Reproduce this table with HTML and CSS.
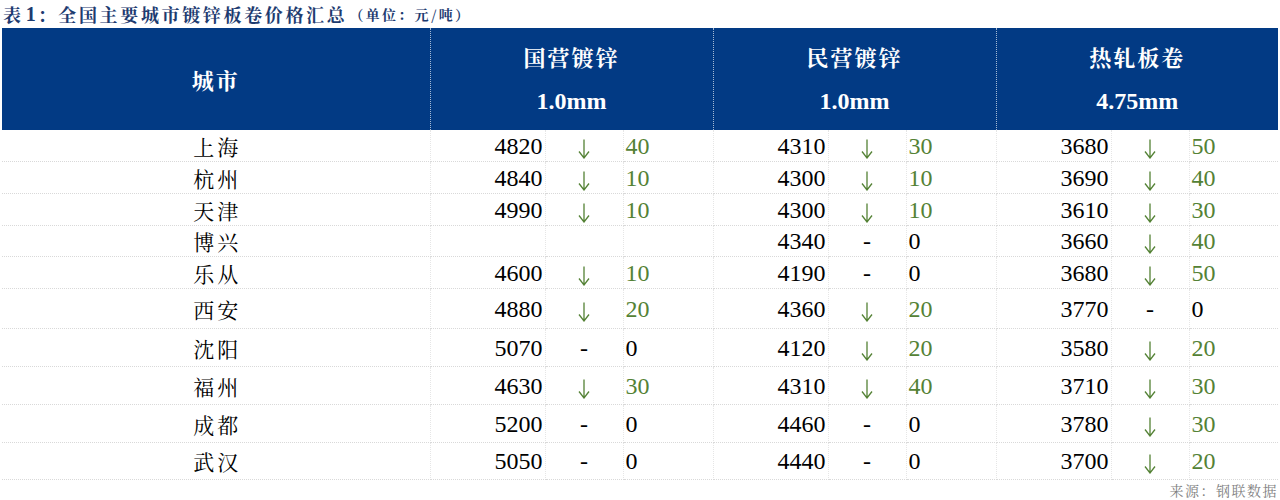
FILE: index.html
```html
<!DOCTYPE html>
<html lang="zh-CN">
<head>
<meta charset="utf-8">
<title>全国主要城市镀锌板卷价格汇总</title>
<link rel="stylesheet" href="styles.css">
</head>
<body>
<div class="title"><span>表</span><span class="tnum">1</span><span>：全国主要城市镀锌板卷价格汇总</span><span class="unit">（单位：元/吨）</span></div>
<table class="grid">
  <colgroup>
    <col class="c-city">
    <col class="c-val"><col class="c-arr"><col class="c-chg">
    <col class="c-val"><col class="c-arr"><col class="c-chg">
    <col class="c-val"><col class="c-arr"><col class="c-chg3">
  </colgroup>
  <thead>
    <tr>
      <th class="hcity">城市</th>
      <th colspan="3" class="hgroup"><div class="h1">国营镀锌</div><div class="h2">1.0mm</div></th>
      <th colspan="3" class="hgroup"><div class="h1">民营镀锌</div><div class="h2">1.0mm</div></th>
      <th colspan="3" class="hgroup last"><div class="h1">热轧板卷</div><div class="h2">4.75mm</div></th>
    </tr>
  </thead>
  <tbody>
    <tr class="r32">
      <td class="city">上海</td>
      <td class="val">4820</td><td class="arr"><svg class="down" viewBox="0 0 12 20"><path d="M6 0.5V19M1 12.5L6 19L11 12.5"/></svg></td><td class="chg g">40</td>
      <td class="val">4310</td><td class="arr"><svg class="down" viewBox="0 0 12 20"><path d="M6 0.5V19M1 12.5L6 19L11 12.5"/></svg></td><td class="chg g">30</td>
      <td class="val">3680</td><td class="arr"><svg class="down" viewBox="0 0 12 20"><path d="M6 0.5V19M1 12.5L6 19L11 12.5"/></svg></td><td class="chg g">50</td>
    </tr>
    <tr class="r32">
      <td class="city">杭州</td>
      <td class="val">4840</td><td class="arr"><svg class="down" viewBox="0 0 12 20"><path d="M6 0.5V19M1 12.5L6 19L11 12.5"/></svg></td><td class="chg g">10</td>
      <td class="val">4300</td><td class="arr"><svg class="down" viewBox="0 0 12 20"><path d="M6 0.5V19M1 12.5L6 19L11 12.5"/></svg></td><td class="chg g">10</td>
      <td class="val">3690</td><td class="arr"><svg class="down" viewBox="0 0 12 20"><path d="M6 0.5V19M1 12.5L6 19L11 12.5"/></svg></td><td class="chg g">40</td>
    </tr>
    <tr class="r32">
      <td class="city">天津</td>
      <td class="val">4990</td><td class="arr"><svg class="down" viewBox="0 0 12 20"><path d="M6 0.5V19M1 12.5L6 19L11 12.5"/></svg></td><td class="chg g">10</td>
      <td class="val">4300</td><td class="arr"><svg class="down" viewBox="0 0 12 20"><path d="M6 0.5V19M1 12.5L6 19L11 12.5"/></svg></td><td class="chg g">10</td>
      <td class="val">3610</td><td class="arr"><svg class="down" viewBox="0 0 12 20"><path d="M6 0.5V19M1 12.5L6 19L11 12.5"/></svg></td><td class="chg g">30</td>
    </tr>
    <tr class="r31">
      <td class="city">博兴</td>
      <td class="val"></td><td class="arr"></td><td class="chg"></td>
      <td class="val">4340</td><td class="arr"><span class="dash">-</span></td><td class="chg">0</td>
      <td class="val">3660</td><td class="arr"><svg class="down" viewBox="0 0 12 20"><path d="M6 0.5V19M1 12.5L6 19L11 12.5"/></svg></td><td class="chg g">40</td>
    </tr>
    <tr class="r32">
      <td class="city">乐从</td>
      <td class="val">4600</td><td class="arr"><svg class="down" viewBox="0 0 12 20"><path d="M6 0.5V19M1 12.5L6 19L11 12.5"/></svg></td><td class="chg g">10</td>
      <td class="val">4190</td><td class="arr"><span class="dash">-</span></td><td class="chg">0</td>
      <td class="val">3680</td><td class="arr"><svg class="down" viewBox="0 0 12 20"><path d="M6 0.5V19M1 12.5L6 19L11 12.5"/></svg></td><td class="chg g">50</td>
    </tr>
    <tr class="r40">
      <td class="city">西安</td>
      <td class="val">4880</td><td class="arr"><svg class="down" viewBox="0 0 12 20"><path d="M6 0.5V19M1 12.5L6 19L11 12.5"/></svg></td><td class="chg g">20</td>
      <td class="val">4360</td><td class="arr"><svg class="down" viewBox="0 0 12 20"><path d="M6 0.5V19M1 12.5L6 19L11 12.5"/></svg></td><td class="chg g">20</td>
      <td class="val">3770</td><td class="arr"><span class="dash">-</span></td><td class="chg">0</td>
    </tr>
    <tr class="r38">
      <td class="city">沈阳</td>
      <td class="val">5070</td><td class="arr"><span class="dash">-</span></td><td class="chg">0</td>
      <td class="val">4120</td><td class="arr"><svg class="down" viewBox="0 0 12 20"><path d="M6 0.5V19M1 12.5L6 19L11 12.5"/></svg></td><td class="chg g">20</td>
      <td class="val">3580</td><td class="arr"><svg class="down" viewBox="0 0 12 20"><path d="M6 0.5V19M1 12.5L6 19L11 12.5"/></svg></td><td class="chg g">20</td>
    </tr>
    <tr class="r38">
      <td class="city">福州</td>
      <td class="val">4630</td><td class="arr"><svg class="down" viewBox="0 0 12 20"><path d="M6 0.5V19M1 12.5L6 19L11 12.5"/></svg></td><td class="chg g">30</td>
      <td class="val">4310</td><td class="arr"><svg class="down" viewBox="0 0 12 20"><path d="M6 0.5V19M1 12.5L6 19L11 12.5"/></svg></td><td class="chg g">40</td>
      <td class="val">3710</td><td class="arr"><svg class="down" viewBox="0 0 12 20"><path d="M6 0.5V19M1 12.5L6 19L11 12.5"/></svg></td><td class="chg g">30</td>
    </tr>
    <tr class="r38">
      <td class="city">成都</td>
      <td class="val">5200</td><td class="arr"><span class="dash">-</span></td><td class="chg">0</td>
      <td class="val">4460</td><td class="arr"><span class="dash">-</span></td><td class="chg">0</td>
      <td class="val">3780</td><td class="arr"><svg class="down" viewBox="0 0 12 20"><path d="M6 0.5V19M1 12.5L6 19L11 12.5"/></svg></td><td class="chg g">30</td>
    </tr>
    <tr class="r37">
      <td class="city">武汉</td>
      <td class="val">5050</td><td class="arr"><span class="dash">-</span></td><td class="chg">0</td>
      <td class="val">4440</td><td class="arr"><span class="dash">-</span></td><td class="chg">0</td>
      <td class="val">3700</td><td class="arr"><svg class="down" viewBox="0 0 12 20"><path d="M6 0.5V19M1 12.5L6 19L11 12.5"/></svg></td><td class="chg g">20</td>
    </tr>
  </tbody>
</table>
<div class="source">来源：钢联数据</div>
</body>
</html>
```
FILE: styles.css
```css
html, body {
  margin: 0;
  padding: 0;
  background: #ffffff;
}

body {
  width: 1280px;
  height: 500px;
  overflow: hidden;
  font-family: "Liberation Serif", "Noto Serif CJK SC", "Noto Sans CJK SC", serif;
  color: #000;
}

.title {
  height: 28px;
  display: flex;
  align-items: center;
  padding-left: 3px;
  box-sizing: border-box;
  color: #1d3b70;
  font-family: "Noto Serif CJK SC", "Noto Sans CJK SC", sans-serif;
  font-weight: bold;
  font-size: 18px;
  letter-spacing: 2.65px;
  white-space: nowrap;
}

.title .tnum {
  font-family: "Liberation Serif", serif;
  font-size: 20px;
  letter-spacing: 0;
  margin-left: 2px;
  margin-right: 2px;
}

.title .unit {
  font-size: 14px;
  letter-spacing: 2.3px;
  margin-left: 2px;
}

.grid {
  margin-left: 2px;
  width: 1276px;
  border-collapse: collapse;
  table-layout: fixed;
}

.c-city { width: 428px; }
.c-val { width: 115px; }
.c-arr { width: 78px; }
.c-chg { width: 90px; }
.c-chg3 { width: 89px; }

.grid thead th {
  background: #023a84;
  color: #ffffff;
  height: 102px;
  padding: 0;
  border-right: 1px dotted rgba(255, 255, 255, 0.65);
  vertical-align: middle;
  font-weight: bold;
}

.grid thead th.last {
  border-right: none;
}

.grid thead th.hcity {
  font-family: "Noto Serif CJK SC", "Noto Sans CJK SC", sans-serif;
  font-size: 22px;
  letter-spacing: 2px;
}

.grid thead th.hgroup {
  vertical-align: top;
}

.hgroup .h1 {
  padding-top: 7px;
  line-height: 44px;
  height: 44px;
  font-family: "Noto Serif CJK SC", "Noto Sans CJK SC", sans-serif;
  font-size: 22px;
  letter-spacing: 2px;
}

.hgroup .h2 {
  line-height: 44px;
  height: 44px;
  font-family: "Liberation Serif", serif;
  font-size: 24px;
}

.grid tbody td {
  padding: 0;
  border-bottom: 1px dotted #d9d9d9;
  border-right: 1px dotted #e6e6e6;
  vertical-align: middle;
  font-size: 24px;
  line-height: 24px;
  white-space: nowrap;
}

.grid tbody td:last-child {
  border-right: none;
}

.r32 td { height: 31px; }
.r31 td { height: 30px; }
.r40 td { height: 39px; }
.r38 td { height: 37px; }
.r37 td { height: 36px; }

.grid tbody td.city {
  text-align: center;
  font-family: "Noto Serif CJK SC", "Noto Sans CJK SC", sans-serif;
  font-size: 21px;
  line-height: 22px;
  letter-spacing: 3px;
  padding-left: 3px;
}

.val {
  text-align: right;
  padding-right: 2px !important;
}

.arr {
  text-align: center;
}

.chg {
  text-align: left;
  padding-left: 2px !important;
}

.chg.g {
  color: #548235;
}

.down {
  width: 12px;
  height: 20px;
  display: inline-block;
  vertical-align: middle;
  margin-top: 4px;
}

.down path {
  fill: none;
  stroke: #548235;
  stroke-width: 1.3;
}

.dash {
  display: inline-block;
  font-size: 24px;
}

.source {
  height: 20px;
  line-height: 20px;
  text-align: right;
  padding-right: 2px;
  color: #7f7f7f;
  font-family: "Noto Serif CJK SC", "Noto Sans CJK SC", sans-serif;
  font-size: 14px;
  letter-spacing: 1.5px;
}
```
